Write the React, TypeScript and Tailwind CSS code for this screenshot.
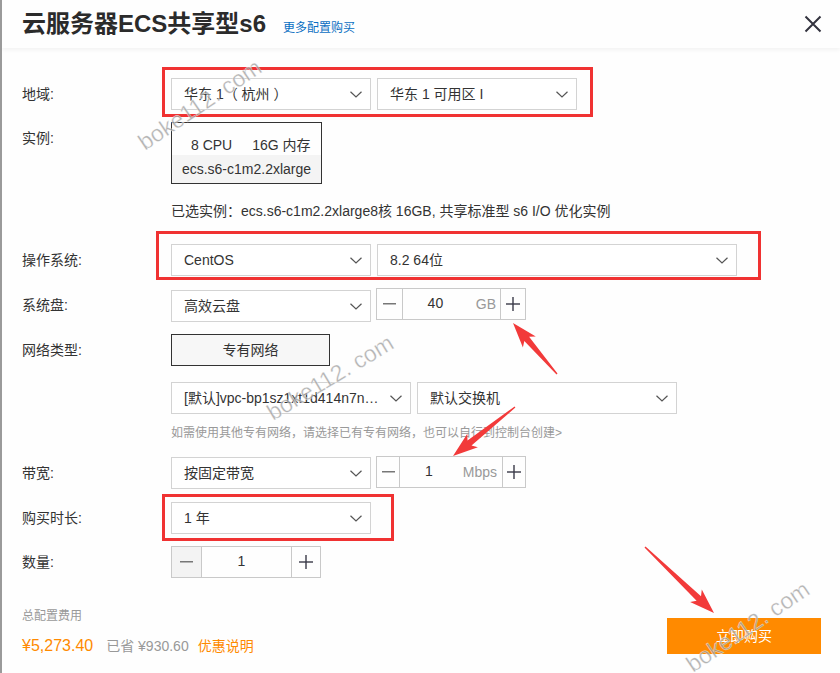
import React from "react";

const FONT = { fontFamily: '"Liberation Sans", "Noto Sans CJK SC", sans-serif' };

function Chevron() {
  return (
    <svg width="12" height="7" viewBox="0 0 12 7" className="shrink-0">
      <polyline points="0.5,0.8 6,6 11.5,0.8" fill="none" stroke="#555" strokeWidth="1.2" />
    </svg>
  );
}

function Select({ w, text, className = "" }: { w: string; text: string; className?: string }) {
  return (
    <div className={`${w} h-[32px] border border-[#d3d3d3] bg-white flex items-center justify-between pl-[12px] pr-[8px] ${className}`}>
      <span className="text-[14px] text-[#333] whitespace-nowrap">{text}</span>
      <Chevron />
    </div>
  );
}

function Minus() {
  return (
    <svg width="13" height="2" viewBox="0 0 13 2">
      <rect x="0" y="0" width="13" height="1.5" fill="#777" />
    </svg>
  );
}

function Plus() {
  return (
    <svg width="14" height="14" viewBox="0 0 14 14">
      <rect x="0" y="6.3" width="14" height="1.4" fill="#3a3a48" />
      <rect x="6.3" y="0" width="1.4" height="14" fill="#3a3a48" />
    </svg>
  );
}

function Label({ children }: { children: React.ReactNode }) {
  return <div className="w-[149px] shrink-0 text-[14px] leading-[32px] text-[#333]">{children}</div>;
}

type Pt = [number, number];
function arrowPoints(tail: Pt, tip: Pt) {
  const dx = tip[0] - tail[0];
  const dy = tip[1] - tail[1];
  const L = Math.hypot(dx, dy);
  const ux = dx / L, uy = dy / L;
  const nx = -uy, ny = ux;
  const hl = 21, sw = 3.2, hw = 8.5;
  const at = (d: number, s: number): Pt => [tail[0] + ux * d + nx * s, tail[1] + uy * d + ny * s];
  const pts: Pt[] = [
    at(0, 0.7),
    at(L - hl, sw),
    at(L - hl - 4, hw),
    tip,
    at(L - hl - 4, -hw),
    at(L - hl, -sw),
    at(0, -0.7),
  ];
  return pts.map((p) => `${p[0].toFixed(1)},${p[1].toFixed(1)}`).join(" ");
}

export default function App() {
  return (
    <div className="relative w-[840px] h-[673px] overflow-hidden bg-[#fefefe] border-l-2 border-[#9a9a9a] text-[#333]" style={FONT}>
      {/* header */}
      <div className="h-[48px] flex items-center pl-[20px] pr-[18px] shadow-[0_2px_4px_rgba(0,0,0,0.05)]">
        <div className="flex items-baseline gap-[17px]">
          <h1 className="text-[24px] leading-[32px] font-bold text-[#2b2b2b]">云服务器ECS共享型s6</h1>
          <span className="text-[12px] text-[#0a6fc2]">更多配置购买</span>
        </div>
        <svg width="18" height="18" viewBox="0 0 18 18" className="ml-auto">
          <path d="M1.5 1.5 L16.5 16.5 M16.5 1.5 L1.5 16.5" stroke="#33333f" strokeWidth="2" />
        </svg>
      </div>

      <div className="pl-[20px]">
        {/* 地域 */}
        <div className="flex mt-[30px]">
          <Label>地域:</Label>
          <div className="flex gap-[6px]">
            <Select w="w-[200px]" text="华东 1（ 杭州 ）" />
            <Select w="w-[200px]" text="华东 1 可用区 I" />
          </div>
        </div>

        {/* 实例 */}
        <div className="flex mt-[12px]">
          <Label>实例:</Label>
          <div className="w-[151px] h-[62px] border border-[#333] flex flex-col">
            <div className="h-[32px] flex gap-[20px] pl-[19px] pt-[12px] text-[14px] leading-[20px]">
              <span>8 CPU</span>
              <span>16G 内存</span>
            </div>
            <div className="flex-1 bg-[#f4f4f4] flex items-center justify-center text-[14px]">ecs.s6-c1m2.2xlarge</div>
          </div>
        </div>

        {/* 已选实例 */}
        <div className="flex mt-[17px]">
          <div className="w-[149px] shrink-0" />
          <div className="text-[14px] leading-[20px]">已选实例：ecs.s6-c1m2.2xlarge8核 16GB, 共享标准型 s6 I/O 优化实例</div>
        </div>

        {/* 操作系统 */}
        <div className="flex mt-[23px]">
          <Label>操作系统:</Label>
          <div className="flex gap-[6px]">
            <Select w="w-[200px]" text="CentOS" />
            <Select w="w-[360px]" text="8.2 64位" />
          </div>
        </div>

        {/* 系统盘 */}
        <div className="flex items-start mt-[12px]">
          <div className="mt-[1px]"><Label>系统盘:</Label></div>
          <div className="flex items-start gap-[5px]">
            <Select w="w-[200px]" text="高效云盘" className="mt-[2px]" />
            <div className="w-[150px] h-[32px] border border-[#c9c9c9] flex">
              <div className="w-[26px] border-r border-[#c9c9c9] flex items-center justify-center"><Minus /></div>
              <div className="flex-1 flex items-center text-[14px]">
                <span className="flex-1 text-center pr-[8px] pb-[2px] text-[#333]">40</span>
                <span className="pr-[4px] text-[#999]">GB</span>
              </div>
              <div className="w-[25px] border-l border-[#c9c9c9] flex items-center justify-center"><Plus /></div>
            </div>
          </div>
        </div>

        {/* 网络类型 */}
        <div className="flex mt-[12px]">
          <Label>网络类型:</Label>
          <div className="w-[159px] h-[32px] border border-[#333] bg-[#f7f7f7] flex items-center justify-center text-[14px]">专有网络</div>
        </div>

        {/* VPC */}
        <div className="flex mt-[16px]">
          <div className="w-[149px] shrink-0" />
          <div className="flex gap-[6px]">
            <Select w="w-[240px]" text="[默认]vpc-bp1sz1xt1d414n7n…" />
            <Select w="w-[260px]" text="默认交换机" />
          </div>
        </div>

        {/* hint */}
        <div className="flex mt-[10px]">
          <div className="w-[149px] shrink-0" />
          <div className="text-[12px] leading-[18px] text-[#999]">如需使用其他专有网络，请选择已有专有网络，也可以自行到控制台创建&gt;</div>
        </div>

        {/* 带宽 */}
        <div className="flex items-start mt-[14px]">
          <div className="mt-[1px]"><Label>带宽:</Label></div>
          <div className="flex items-start gap-[5px]">
            <Select w="w-[200px]" text="按固定带宽" className="mt-[1px]" />
            <div className="w-[150px] h-[32px] border border-[#c9c9c9] flex">
              <div className="w-[23px] border-r border-[#c9c9c9] flex items-center justify-center"><Minus /></div>
              <div className="flex-1 flex items-center text-[14px]">
                <span className="flex-1 text-center pr-[5px] pb-[2px] text-[#333]">1</span>
                <span className="pr-[5px] text-[#999]">Mbps</span>
              </div>
              <div className="w-[23px] border-l border-[#c9c9c9] flex items-center justify-center"><Plus /></div>
            </div>
          </div>
        </div>

        {/* 购买时长 */}
        <div className="flex mt-[13px]">
          <Label>购买时长:</Label>
          <Select w="w-[200px]" text="1 年" />
        </div>

        {/* 数量 */}
        <div className="flex mt-[12px]">
          <Label>数量:</Label>
          <div className="w-[150px] h-[32px] border border-[#c9c9c9] flex">
            <div className="w-[30px] bg-[#f3f3f3] border-r border-[#c9c9c9] flex items-center justify-center"><Minus /></div>
            <div className="flex-1 flex items-center justify-center text-[14px] pb-[2px] pr-[10px]">1</div>
            <div className="w-[29px] border-l border-[#c9c9c9] flex items-center justify-center"><Plus /></div>
          </div>
        </div>

        {/* footer */}
        <div className="flex justify-between items-start mt-[29px] pr-[19px]">
          <div>
            <div className="text-[12px] leading-[18px] text-[#999]">总配置费用</div>
            <div className="flex items-baseline mt-[9px] leading-[24px]">
              <span className="text-[16px] text-[#ff8a00]">¥5,273.40</span>
              <span className="ml-[13px] text-[14px] text-[#999]">已省 ¥930.60</span>
              <span className="ml-[9px] text-[14px] text-[#ff8a00]">优惠说明</span>
            </div>
          </div>
          <button className="mt-[11px] w-[154px] h-[36px] bg-[#ff8a00] text-white text-[14px]">立即购买</button>
        </div>
      </div>

      {/* annotation overlay */}
      <svg className="absolute left-[-2px] top-0 pointer-events-none" width="840" height="673" viewBox="0 0 840 673">
        <rect x="163.5" y="68.5" width="428" height="47" fill="none" stroke="#f03232" strokeWidth="3" />
        <rect x="157.5" y="232.5" width="602" height="46" fill="none" stroke="#f03232" strokeWidth="3" />
        <rect x="163.5" y="495.5" width="229" height="44" fill="none" stroke="#f03232" strokeWidth="3" />
        <polygon points={arrowPoints([557, 374], [513, 323])} fill="#f23a3a" />
        <polygon points={arrowPoints([515, 407], [453, 456])} fill="#f23a3a" />
        <polygon points={arrowPoints([645, 547], [714, 613])} fill="#f23a3a" />
        <g fontFamily="Liberation Sans, sans-serif" fontSize="23" fill="#9a9a9a" fillOpacity="0.75" stroke="#ffffff" strokeOpacity="0.6" strokeWidth="0.6">
          <text x="145" y="151" transform="rotate(-34 145 151)">boke112. com</text>
          <text x="273" y="421" transform="rotate(-31 273 421)">boke112. com</text>
          <text x="693" y="673" transform="rotate(-34 693 673)">boke112. com</text>
        </g>
      </svg>
    </div>
  );
}
